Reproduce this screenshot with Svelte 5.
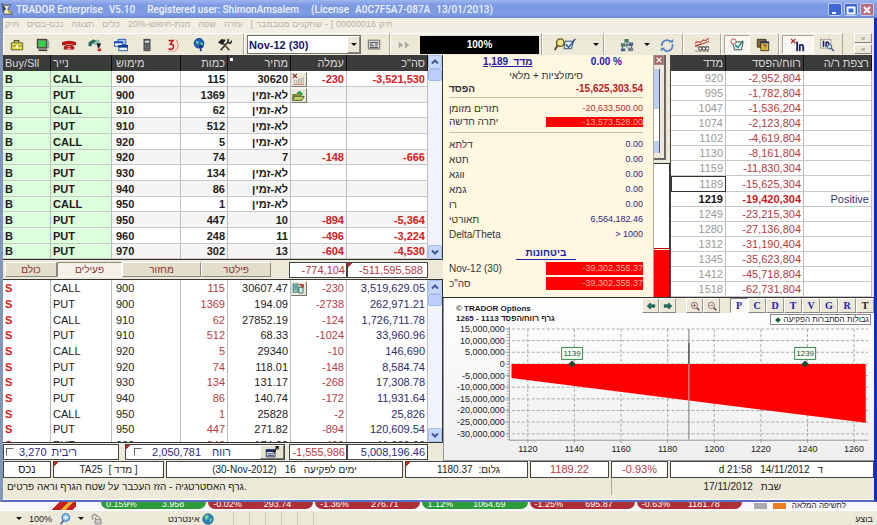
<script>
	const menu = ["תיק", "נכס-בסיס", "תצוגה", "כלים", "מנת-חיפוש-20%", "שפה", "עזרה"];

	const columns = ["Buy/Sll", "נייר", "מימוש", "כמות", "מחיר", "עמלה", 'סה"כ'];

	const buys = [
		["CALL", "900", "115", "30620", "-230", "-3,521,530"],
		["PUT", "900", "1369", "לא-זמין", "", ""],
		["CALL", "910", "62", "לא-זמין", "", ""],
		["PUT", "910", "512", "לא-זמין", "", ""],
		["CALL", "920", "5", "לא-זמין", "", ""],
		["PUT", "920", "74", "7", "-148", "-666"],
		["PUT", "930", "134", "לא-זמין", "", ""],
		["PUT", "940", "86", "לא-זמין", "", ""],
		["CALL", "950", "1", "לא-זמין", "", ""],
		["PUT", "950", "447", "10", "-894", "-5,364"],
		["PUT", "960", "248", "11", "-496", "-3,224"],
		["PUT", "970", "302", "13", "-604", "-4,530"],
	];

	const sells = [
		["CALL", "900", "115", "30607.47", "-230", "3,519,629.05"],
		["PUT", "900", "1369", "194.09", "-2738", "262,971.21"],
		["CALL", "910", "62", "27852.19", "-124", "1,726,711.78"],
		["PUT", "910", "512", "68.33", "-1024", "33,960.96"],
		["CALL", "920", "5", "29340", "-10", "146,690"],
		["PUT", "920", "74", "118.01", "-148", "8,584.74"],
		["PUT", "930", "134", "131.17", "-268", "17,308.78"],
		["PUT", "940", "86", "140.74", "-172", "11,931.64"],
		["CALL", "950", "1", "25828", "-2", "25,826"],
		["PUT", "950", "447", "271.82", "-894", "120,609.54"],
		["PUT", "960", "248", "174.00", "-496", "41,000.00"],
	];

	const scenarios = [
		["920", "-2,952,804"],
		["995", "-1,782,804"],
		["1047", "-1,536,204"],
		["1074", "-2,123,804"],
		["1102", "-4,619,804"],
		["1130", "-8,161,804"],
		["1159", "-11,830,304"],
		["1189", "-15,625,304"],
		["1219", "-19,420,304", "Positive"],
		["1249", "-23,215,304"],
		["1280", "-27,136,804"],
		["1312", "-31,190,404"],
		["1345", "-35,623,804"],
		["1412", "-45,718,804"],
		["1518", "-62,731,804"],
	];

	const greeks = [
		["דלתא", "0.00"],
		["תטא", "0.00"],
		["ווגא", "0.00"],
		["גמא", "0.00"],
		["רו", "0.00"],
		["תאורטי", "6,564,182.46"],
		["Delta/Theta", "> 1000"],
	];

	const ticker = [
		["0.159%", "3.958", "up"],
		["-0.02%", "293.74", "down"],
		["-1.36%", "276.71", "down"],
		["1.12%", "1064.69", "up"],
		["-1.25%", "695.87", "down"],
		["-0.63%", "1181.78", "down"],
	];

	const tabs = ["כולם", "פעילים", "מחזור", "פילטר"];
	const graphModes = ["P", "C", "D", "T", "V", "G", "R", "T"];

	let activeTab = $state(1);
	let activeMode = $state(0);

	// chart scales
	const yTicks = [15, 10, 5, 0, -5, -10, -15, -20, -25, -30];
	const xTicks = [1120, 1140, 1160, 1180, 1200, 1220, 1240, 1260];
	const px = (v) => 84 + (v - 1120) * 2.336;
	const py = (m) => 38 - m * 2.335;
	const tickLabel = (m) => (m * 1000000).toLocaleString("en-US");
</script>

{#snippet icon(name)}
	<svg class="icon" viewBox="0 0 16 16" aria-hidden="true">
		{#if name === "case"}
			<path d="M5 5V3h5v2" fill="none" stroke="#555520" stroke-width="1.500" />
			<path d="M1.500 5.500h13v8h-13z" fill="#e5e04a" stroke="#55551c" />
			<path d="M2 9h12" stroke="#77772a" /><path d="M7 8h2v3H7z" fill="#fff" />
		{:else if name === "monitor"}
			<path d="M1.500 1.500h11v10h-11z" fill="#77776a" stroke="#222" />
			<path d="M3 3h8v7H3z" fill="#31d54a" /><path d="M3 13h10v2H3z" fill="#444" /><path d="M14 3v9" stroke="#999" stroke-width="2" />
		{:else if name === "phone"}
			<path d="M0 5q8-3 16 0v3h-4V7H4v1H0z" fill="#c31818" stroke="#8a1010" stroke-width=".5" />
			<path d="M2 10l3-2h6l3 2v3H2z" fill="#ad1b1b" /><path d="M6 10h4M6 12h4" stroke="#f5b0a0" />
		{:else if name === "swap"}
			<path d="M1 9V5l5-3 3 1-5 4v2z" fill="#24715e" stroke="#114436" stroke-width=".5" />
			<path d="M6 6l5-4 2 2-4 4z" fill="#8fc7b5" stroke="#24715e" stroke-width=".5" /><path d="M10 6h5l-2 5h-2z" fill="#222" /><path d="M11 12h4v3h-4z" fill="#c42b22" />
		{:else if name === "windows"}
			<path d="M4.500 1.500h9v6h-9z" fill="#9fc4ff" stroke="#1749b3" /><path d="M.5 4.500h9v5h-9z" fill="#eaf2ff" stroke="#1749b3" />
			<path d="M0 4h10v2H0z" fill="#164ac1" /><path d="M5.500 8.500h10v6h-10z" fill="#eaf2ff" stroke="#1749b3" /><path d="M5 8h11v3H5z" fill="#103a9b" />
		{:else if name === "calc"}
			<path d="M4 1h8v14H4z" fill="#494b50" /><path d="M5.500 3h5v2.500h-5z" fill="#d1ded6" />
			<path d="M5.500 8h5M5.500 10.500h5M5.500 13h5" stroke="#c8c8c8" stroke-dasharray="1 1" />
		{:else if name === "three"}
			<path d="M3 3h5L5 7q5 0 3 5-2 2-5 0" fill="none" stroke="#c82020" stroke-width="1.800" />
			<path d="M11 2q3 1 2 4 2 2 0 6l-2 2" fill="none" stroke="#e0664e" /><path d="M2 15h9" stroke="#d7a59c" />
		{:else if name === "globe"}
			<circle cx="8" cy="6" r="5.500" fill="#1d61c9" stroke="#12346e" /><path d="M4 3l4 1-2 4zM9 5l4 1-2 3z" fill="#64d28c" />
			<path d="M8 8h5v3h-2v4H9v-4H8z" fill="#183f8d" />
		{:else if name === "tools"}
			<path d="M3 14l9-10M12 1l-1 4 3 1 2-3" fill="none" stroke="#333" stroke-width="2" />
			<path d="M13 14L5 5" stroke="#5a4b31" stroke-width="2" /><path d="M0 5l4-4 5 1-4 6z" fill="#262626" />
		{:else if name === "board"}
			<path d="M1.500 2.500h13v10h-13z" fill="#eee" stroke="#555" /><path d="M3 5h10M3 7h4M9 7h4M3 9h5M9 9h3M3 11h10" stroke="#333" />
		{:else if name === "skip"}
			<path d="M2 4l5 4-5 4zM9 4l5 4-5 4z" fill="#aaa89c" />
		{:else if name === "refresh"}
			<path d="M2 9a6 6 0 0 1 10-5M14 7a6 6 0 0 1-10 6" fill="none" stroke="#5682c9" stroke-width="2" />
			<path d="M10 5h5V1zM6 11H1v4z" fill="#5682c9" />
		{:else if name === "trend"}
			<path d="M0 6l3-2 3 1 4-3 2 1 4-3M0 9l7-2 9-3" fill="none" stroke="#bf3434" stroke-width="1.200" /><path d="M0 10h16M0 15h16" stroke="#8d8278" />
			<circle cx="6" cy="12" r="2" fill="#ddd" stroke="#333" /><circle cx="10" cy="12" r="2" fill="#ddd" stroke="#333" /><circle cx="14" cy="12" r="2" fill="#ddd" stroke="#333" />
		{:else if name === "check"}
			<path d="M3 4.500h12l-2 9H5z" fill="#e2f0ee" stroke="#253e3f" /><circle cx="4" cy="4" r="3" fill="#fff" stroke="#bd3333" />
			<path d="M6 8l3 3 6-8" fill="none" stroke="#157a72" stroke-width="1.500" />
		{:else if name === "help"}
			<path d="M1.500 1.500h10v9h-10z" fill="#7a6b32" stroke="#302b1b" /><path d="M5.500 4.500h9v10h-9z" fill="#e8bd26" stroke="#312c25" />
			<path d="M5 4h10v2H5z" fill="#23346c" /><path d="M8 8q4-1 4 1-2 1-2 2M10 12v1" fill="none" stroke="#33258b" />
		{:else if name === "xin"}
			<path d="M0 1l5 5M5 1L0 6" stroke="#b22b2b" stroke-width="1.500" /><path d="M7 4v11M10 15V7M10 9q4-3 4 1v5" fill="none" stroke="#19226f" stroke-width="2" />
		{:else if name === "find"}
			<path d="M.5 1.500h12v10H.5z" fill="none" stroke="#777" stroke-dasharray="2 1" /><path d="M4 3v7M7 10V5q3-1 3 2v3" fill="none" stroke="#19226f" stroke-width="1.800" />
			<circle cx="11" cy="10" r="2.500" fill="#cce5f5" stroke="#28456e" /><path d="M13 12l3 3" stroke="#28456e" stroke-width="1.500" />
		{:else if name === "cells"}
			<path d="M1 1l5 5M6 1L1 6" stroke="#862b1c" stroke-width="1.500" /><path d="M3 13V9h3v4M8 13V7h2v6M12 13V6h2v7" fill="none" stroke="#b3a59d" /><path d="M2 14h13" stroke="#b96051" />
		{:else if name === "folder"}
			<path d="M1 7h5l1-2h4v8H1z" fill="#9da536" stroke="#3d4a1c" /><path d="M3 9h12l-3 5H1z" fill="#c8d267" stroke="#344819" /><path d="M6 5q4-5 6 0h2l-3 4-3-4z" fill="#28a34b" />
		{:else if name === "copy"}
			<path d="M1.500 2.500h6v10h-6z" fill="#9adfd3" stroke="#195f5c" /><path d="M3 5h3M3 7h3M3 9h3" stroke="#195f5c" /><path d="M8.500 6.500h5v7h-5z" fill="#d9f1ec" stroke="#195f5c" /><path d="M8 2l7 1-1 5z" fill="#c72d2d" />
		{:else if name === "edit"}
			<path d="M1.500 5.500h10v8h-10z" fill="#dde2ee" stroke="#222b55" /><path d="M1 5h11v3H1z" fill="#202b62" /><path d="M3 10h7M3 12h7" stroke="#38436e" /><path d="M10 9l4-7M12 2h3v3" fill="none" stroke="#111" stroke-width="1.500" />
		{:else if name === "left"}
			<path d="M2 8l5-5v3h7v4H7v3z" fill="#1e7762" stroke="#123b36" />
		{:else if name === "right"}
			<path d="M14 8L9 3v3H2v4h7v3z" fill="#1e7762" stroke="#123b36" />
		{:else if name === "zoomin" || name === "zoomout"}
			<circle cx="7" cy="7" r="5" fill="#f5e8e5" stroke="#633" /><path d="M11 11l4 4" stroke="#322" stroke-width="2" /><path d="M4 7h6" stroke="#633" />
			{#if name === "zoomin"}<path d="M7 4v6" stroke="#633" />{/if}
		{:else if name === "earth"}
			<circle cx="8" cy="8" r="7" fill="#2684b8" stroke="#1c5c80" /><path d="M3 4l5-2 1 4-4 4zM10 7l4 1-3 5z" fill="#85ce93" />
		{:else if name === "lens"}
			<circle cx="9" cy="6" r="5" fill="#8cc4ee" stroke="#3579b5" stroke-width="1.500" /><path d="M6 10l-4 5" stroke="#44658a" stroke-width="2" /><path d="M6 6h6M9 3v6" stroke="#fff" stroke-width="1.500" />
		{:else if name === "lock"}
			<path d="M2 9V4q3-4 6 0" fill="none" stroke="#999" stroke-width="2" /><path d="M6 8V6q3-3 6 0v2" fill="none" stroke="#777" /><path d="M5.500 8.500h8v6h-8z" fill="#c9c9c9" stroke="#777" />
		{:else if name === "app"}
			<path d="M2 2l5 2 5-1-3 5 5 6H5z" fill="#e9eadf" stroke="#444" /><path d="M3 2l4 6-4 4z" fill="#434b4c" /><path d="M8 9l5 1-2 4z" fill="#b8a33b" />
		{/if}
	</svg>
{/snippet}

{#snippet scrollbar()}
	<div class="scrollbar" aria-hidden="true">
		<span class="arrow"><svg viewBox="0 0 8 8"><path d="M1 5.500l3-3 3 3" /></svg></span>
		<span class="thumb"></span>
		<span class="arrow last"><svg viewBox="0 0 8 8"><path d="M1 2.500l3 3 3-3" /></svg></span>
	</div>
{/snippet}

{#snippet cols()}
	<colgroup>
		<col class="c-side" /><col class="c-paper" /><col class="c-strike" /><col class="c-qty" /><col class="c-price" /><col class="c-fee" /><col class="c-total" />
	</colgroup>
{/snippet}

{#snippet order(side, row, actionIcon)}
	<tr>
		<td class="side">{side}</td>
		<td class="paper">{row[0]}</td>
		<td class="strike">{row[1]}</td>
		<td class="qty">{row[2]}</td>
		<td class="price">{row[3]}</td>
		<td class="fee">
			<div class="fee-cell">
				{#if actionIcon}
					<button class="row-action" aria-label={actionIcon}>{@render icon(actionIcon)}</button>
				{/if}
				<span>{row[4]}</span>
			</div>
		</td>
		<td class="total">{row[5]}</td>
	</tr>
{/snippet}

<div class="window">
	<header class="titlebar">
		{@render icon("app")}
		<h1><span>TRADOR Enterprise</span><span>V5.10</span><span class="user">Registered user: ShimonAmsalem</span><span>(License</span><span>A0C7F5A7-087A</span><span>13/01/2013)</span></h1>
		<button class="sys" aria-label="Minimize"><svg viewBox="0 0 12 12"><path d="M3 9h4" /></svg></button>
		<button class="sys" aria-label="Maximize"><svg viewBox="0 0 12 12"><path d="M2.500 3.500h7v6h-7z" /></svg></button>
		<button class="sys close" aria-label="Close"><svg viewBox="0 0 12 12"><path d="M3 3l6 6M9 3l-6 6" /></svg></button>
	</header>

	<div class="frame">
		<nav class="menu">
			{#each menu as item}
				<span dir="rtl">{item}</span>
			{/each}
			<span class="file"><bdi>[</bdi><bdi>שחקנים מנובמבר</bdi><bdi>-</bdi><bdi>[ 00000016</bdi><bdi>תיק</bdi></span>
		</nav>

		<div class="toolbar">
			<div class="group main-tools">
				{#each ["case", "monitor", "phone", "swap", "windows", "calc", "three", "globe", "tools"] as name}
					<button class="tool" aria-label={name}>{@render icon(name)}</button>
				{/each}
			</div>
			<div class="group">
				<div class="month">
					<select aria-label="Expiry"><option>Nov-12 (30)</option></select>
					<span class="drop"><i class="down"></i></span>
				</div>
				<button class="tool" aria-label="board">{@render icon("board")}</button>
			</div>
			<div class="group progress-group">
				<button class="tool" aria-label="skip">{@render icon("skip")}</button>
				<div class="progress">100%</div>
			</div>
			<div class="group scan">
				<button class="tool wide" aria-label="Scan">
					<svg class="icon-wide" viewBox="0 0 24 16" aria-hidden="true">
						<circle cx="7" cy="6" r="4" fill="#f3e58e" stroke="#66551c" stroke-width="1.500" /><path d="M4 9l-3 5" stroke="#554516" stroke-width="2" />
						<path d="M12 4.500h9l-2 8h-8z" fill="#dcecf5" stroke="#294b68" /><path d="M13 8l3 3 7-9" fill="none" stroke="#244c88" stroke-width="1.500" />
					</svg>
				</button>
				<i class="down"></i>
			</div>
			<div class="group tree">
				<button class="tool" aria-label="Tree">
					<svg class="icon" viewBox="0 0 16 16" aria-hidden="true">
						<path d="M8 4v7M3 8h10M3 8v4M13 8v4" stroke="#334466" /><path d="M5 1h5v4H5zM1 6h5v4H1z" fill="#4b8067" /><path d="M10 5h5v4h-5zM1 12h5v3H1z" fill="#495e9a" /><path d="M9 11h6v4H9z" fill="#74848c" />
					</svg>
				</button>
				<i class="down"></i>
				<button class="tool" aria-label="refresh">{@render icon("refresh")}</button>
			</div>
			<div class="group trend"><button class="tool" aria-label="trend">{@render icon("trend")}</button></div>
			<div class="group">
				<button class="tool pressed" aria-label="check">{@render icon("check")}</button>
				<button class="tool" aria-label="help">{@render icon("help")}</button>
			</div>
			<div class="group">
				<button class="tool pressed wide" aria-label="xin">{@render icon("xin")}</button>
				<button class="tool" aria-label="find">{@render icon("find")}</button>
			</div>
			<div class="mini">
				<button aria-label="More up">«</button>
				<button aria-label="More down">«</button>
			</div>
		</div>

		<main class="panes">
			<section class="orders">
				<div class="grid-box">
					<table class="orders-table buy">
						{@render cols()}
						<thead>
							<tr>
								{#each columns as name, i}
									<th class:num={i > 2} class:strike={i === 2} class:sorted={i === 4}>{name}</th>
								{/each}
							</tr>
						</thead>
						<tbody>
							{#each buys as row, i}
								{@render order("B", row, ["cells", "folder"][i])}
							{/each}
						</tbody>
					</table>
					{@render scrollbar()}
				</div>

				<div class="tabs">
					<div class="tab-list">
						{#each tabs as tab, i}
							<button class:active={activeTab === i} onclick={() => (activeTab = i)}>{tab}</button>
						{/each}
					</div>
					<output class="sum fee-sum loss">-774,104</output>
					<output class="sum total-sum loss flag">-511,595,588</output>
					<span class="sum-end"></span>
				</div>

				<div class="grid-box sell-box">
					<table class="orders-table sell">
						{@render cols()}
						<tbody>
							{#each sells as row, i}
								{@render order("S", row, ["copy"][i])}
							{/each}
						</tbody>
					</table>
					{@render scrollbar()}
				</div>

				<div class="totals">
					<label class="sum interest"><input type="checkbox" /><span>3,270</span><span>ריבית</span></label>
					<div class="sum profit flag">
						<label><input type="checkbox" /><span class="amount">2,050,781</span><span>רווח</span></label>
						<button class="edit" aria-label="edit">{@render icon("edit")}</button>
					</div>
					<output class="sum fee-sum loss">-1,555,986</output>
					<output class="sum total-sum">5,008,196.46</output>
					<span class="sum-end"></span>
				</div>
			</section>

			<section class="analysis">
				<div class="upper">
					<aside class="summary">
						<div class="summary-top">
							<a href="#index">1,189 &nbsp;מדד</a>
							<b>0.00 %</b>
						</div>
						<p class="mode">סימולציות + מלאי</p>
						<div class="line result"><span>הפסד</span><b>-15,625,303.54</b></div>
						<div class="cash">
							<div class="line"><span>תזרים מזומן</span><span class="value red">-20,633,500.00</span></div>
							<div class="line"><span>יתרה חדשה</span><span class="value alarm">-13,573,528.00</span></div>
						</div>
						<div class="greeks">
							{#each greeks as [name, value]}
								<div class="line"><span>{name}</span><span class="value">{value}</span></div>
							{/each}
						</div>
						<h2>ביטחונות</h2>
						<div class="margin">
							<div class="line"><span>Nov-12 (30)</span><span class="value alarm">-39,302,355.37</span></div>
							<div class="line"><span>סה"כ</span><span class="value alarm">-39,302,355.37</span></div>
						</div>
					</aside>
					<div class="behind">
						<div class="tool-window">
							<button class="x" aria-label="Close panel"><svg viewBox="0 0 10 10"><path d="M2 2l6 6M8 2L2 8" /></svg></button>
							<div class="strip"></div>
						</div>
						<div class="bar"></div>
					</div>
					<table class="scenarios">
						<colgroup><col class="s-index" /><col class="s-result" /><col class="s-floor" /></colgroup>
						<thead><tr><th>מדד</th><th>רווח/הפסד</th><th>רצפת ר/ה</th></tr></thead>
						<tbody>
							{#each scenarios as [index, result, floor]}
								<tr class:current={index === "1219"}>
									<td class:picked={index === "1189"}>{index}</td>
									<td class="result">{result}</td>
									<td class="floor">{floor || ""}</td>
								</tr>
							{/each}
						</tbody>
					</table>
				</div>

				<div class="graph">
					<div class="graph-head">
						<div class="graph-title">
							<div>© TRADOR Options</div>
							<div dir="rtl">גרף רווח/הפסד 1113 - 1265</div>
						</div>
						<div class="graph-side">
							<div class="graph-tools">
								<button aria-label="left">{@render icon("left")}</button>
								<button aria-label="right">{@render icon("right")}</button>
								<span class="gap"></span>
								<button aria-label="zoom in">{@render icon("zoomin")}</button>
								<button aria-label="zoom out">{@render icon("zoomout")}</button>
								<span class="gap"></span>
								{#each graphModes as mode, i}
									<button class="mode-btn" class:active={activeMode === i} class:dark={i === 7} onclick={() => (activeMode = i)}>{mode}</button>
								{/each}
							</div>
							<div class="legend"><i></i><span>גבולות הסתברות הפקיעה</span></div>
						</div>
					</div>
					<svg class="plot" viewBox="0 0 431 134" role="img" aria-label="רווח/הפסד">
						{#each yTicks as m}
							<path class="guide" d="M68 {py(m)}H425" />
							<path class="axis" d="M62 {py(m)}H66" />
							<text x="61" y={py(m) + 3} text-anchor="end">{tickLabel(m)}</text>
						{/each}
						{#each xTicks as v}
							<path class="guide" d="M{px(v)} 3V114" />
							<path class="axis" d="M{px(v)} 114v3" />
							<text x={px(v)} y="126" text-anchor="middle">{v}</text>
						{/each}
						<path class="axis" d="M65.500 1V114.500H425" />
						<path class="ticks" d="M64 2V114" />
						<path class="loss-area" d="M{px(1113)} {py(0)}H{px(1265)}V{py(-25.3)}L{px(1113)} {py(-6)}Z" />
						<path class="cursor" d="M245.500 3V114" />
						<path class="cursor-top" d="M245.500 17V38" />
						<path class="cursor-area" d="M245.500 38V75" />
						{#each [1139, 1239] as v}
							<rect class="tag" x={px(v) - 10.5} y="21.500" width="21" height="12" />
							<text class="tag-text" x={px(v)} y="30" text-anchor="middle">{v}</text>
							<path class="marker" d="M{px(v)} 34.500l3.500 3.500-3.500 3.500-3.500-3.500z" />
						{/each}
					</svg>
				</div>
			</section>
		</main>

		<div class="status">
			<span>נכס</span>
			<span class="flag"><bdi>TA25</bdi><bdi>[ מדד ]</bdi></span>
			<span><bdi>(30-Nov-2012)</bdi><bdi>16</bdi><bdi>ימים לפקיעה</bdi></span>
			<span class="flag end"><bdi>1180.37</bdi><bdi dir="rtl">גלום:</bdi></span>
			<span class="loss">1189.22</span>
			<span class="loss">-0.93%</span>
			<span class="date"><bdi>d 21:58</bdi><bdi>14/11/2012</bdi><bdi>ד</bdi></span>
		</div>
		<div class="hint">
			<span>גרף האסטרטגיה - הזז העכבר על שטח הגרף וראה פרטים.</span>
			<span class="day"><bdi>17/11/2012</bdi><bdi>שבת</bdi></span>
		</div>
	</div>
</div>

<div class="ticker">
	<span class="ticker-logo"><i></i></span>
	{#each ticker as [change, value, dir]}
		<span class="pill {dir}"><span>{change}</span><span>{value}</span></span>
	{/each}
	<span class="ticker-end"><i class="knob"></i><i class="orange"></i><span>לחשיפה המלאה</span></span>
</div>

<footer class="browser-status">
	<i class="down"></i>
	<span>100%</span>
	{@render icon("lens")}
	<i class="down"></i>
	{@render icon("lock")}
	<span class="zone">אינטרנט {@render icon("earth")}</span>
	<span class="slots"><i></i><i></i><i></i><i></i><i></i><i></i></span>
	<span class="done">בוצע</span>
</footer>

<style>
	:global(body) {
		margin: 0;
		background: #ece9d8;
		font-family: "Liberation Sans", Arial, sans-serif;
		font-size: 11px;
		color: #222;
	}
	button,
	select {
		font: inherit;
		color: inherit;
		margin: 0;
		padding: 0;
	}
	svg {
		display: block;
	}
	.icon {
		width: 14px;
		height: 14px;
		flex: none;
	}
	.icon-wide {
		width: 24px;
		height: 15px;
	}
	.down {
		border: 3px solid transparent;
		border-top-color: #111;
		border-bottom: 0;
		flex: none;
	}
	.titlebar {
		display: flex;
		align-items: center;
		gap: 2px;
		height: 18px;
		padding: 0 3px 0 0;
		background: linear-gradient(#9db5ee, #7b98e2 30%, #7e9ce4 80%, #6c86cf);
		color: #edf2ff;
	}
	.titlebar h1 {
		display: flex;
		gap: 6px;
		flex: 1;
		margin: 0;
		font: 500 10px/19px Roboto, "Open Sans", sans-serif;
		white-space: nowrap;
	}
	.user {
		margin: 0 6px;
	}
	.sys {
		width: 14px;
		height: 13px;
		border: 1px solid #c0cdf2;
		border-radius: 2px;
		background: #3d67d2;
	}
	.sys svg {
		fill: none;
		stroke: #fff;
		stroke-width: 2;
	}
	.sys.close {
		background: #bb6a7c;
	}
	.frame {
		border-left: 3px solid #8496b5;
		border-right: 3px solid #0c2fc0;
		border-bottom: 2px solid #5b6bc0;
		background: #ece9d8;
	}
	.menu {
		display: flex;
		gap: 8px;
		height: 15px;
		padding-left: 2px;
		line-height: 13px;
		font-size: 9px;
		color: #b5b2a4;
		white-space: nowrap;
		background: #f1efe4;
	}
	.file {
		display: flex;
		gap: 3px;
	}
	.toolbar {
		display: flex;
		height: 22px;
		white-space: nowrap;
	}
	.group {
		display: flex;
		align-items: center;
		padding: 0 2px;
		border-right: 1px solid #aca899;
		border-left: 1px solid #fff;
		border-top: 1px solid #fff;
	}
	.main-tools {
		padding: 0 5px 0 0;
	}
	.tool {
		display: flex;
		align-items: center;
		justify-content: center;
		width: 26px;
		height: 19px;
		border: 1px solid transparent;
		background: none;
	}
	.tool.wide {
		width: 32px;
	}
	.tool.pressed {
		background: #f8f7f1;
		border-color: #aca899 #fff #fff #aca899;
	}
	.month {
		display: flex;
		width: 112px;
		height: 17px;
		border: 1px solid #77756a;
		background: #fff;
	}
	.month select {
		flex: 1;
		min-width: 0;
		appearance: none;
		border: 0;
		padding-left: 1px;
		background: #fff;
		color: #16166b;
		font-weight: bold;
		font-size: 11px;
	}
	.drop {
		display: flex;
		align-items: center;
		justify-content: center;
		width: 11px;
		background: #ece9d8;
		border: 1px solid;
		border-color: #fff #888 #888 #fff;
	}
	.progress-group {
		gap: 3px;
		padding-left: 0;
	}
	.progress {
		width: 119px;
		height: 18px;
		background: #000;
		color: #fff;
		font: bold 10px/17px "Liberation Sans", sans-serif;
		text-align: center;
	}
	.scan {
		gap: 12px;
		padding: 0 4px 0 6px;
	}
	.tree {
		gap: 4px;
		padding: 0 2px 0 9px;
	}
	.trend {
		padding: 0 5px;
	}
	.mini {
		display: flex;
		flex-direction: column;
		width: 18px;
		margin-left: auto;
		margin-right: 2px;
		gap: 1px;
	}
	.mini button {
		height: 10px;
		border: 1px solid;
		border-color: #fff #888 #888 #fff;
		background: #ece9d8;
		color: #888;
		font-size: 8px;
		line-height: 7px;
	}
	.panes {
		display: grid;
		grid-template-columns: 440fr 431fr;
	}
	.orders,
	.analysis {
		min-width: 0;
	}
	.grid-box {
		display: flex;
		border-right: 1px solid #333;
		border-bottom: 1px solid #333;
		background: #fff;
	}
	.orders-table {
		flex: 1;
		min-width: 0;
		table-layout: fixed;
		border-collapse: separate;
		border-spacing: 0;
	}
	.c-side { width: 48px; }
	.c-paper { width: 61px; }
	.c-strike { width: 69px; }
	.c-qty { width: 47px; }
	.c-price { width: 63px; }
	.c-fee { width: 56px; }
	.c-total { width: 81px; }
	th {
		height: 16px;
		box-sizing: border-box;
		padding: 0 4px 0 2px;
		background: #3b3b3b;
		border-right: 1px solid #111;
		color: #d8d8d8;
		font-size: 11px;
		font-weight: normal;
		line-height: 14px;
		text-align: left;
		white-space: nowrap;
	}
	th.num,
	.scenarios th {
		text-align: right;
		padding-right: 2px;
	}
	th.sorted {
		background: linear-gradient(#fff, #fff) 2px 3px / 3px 3px no-repeat #3b3b3b;
	}
	td {
		height: 16px;
		box-sizing: border-box;
		padding: 0 2px;
		border-right: 1px solid #bcbcbc;
		line-height: 14px;
		white-space: nowrap;
	}
	.orders-table tbody tr:nth-child(3n) td {
		height: 15px;
	}
	.buy td {
		border-bottom: 1px solid #c8c8c8;
		font-weight: bold;
		color: #1c1c1c;
	}
	.buy tr:nth-child(even) td {
		background: #f5f5f5;
	}
	.buy tr .side,
	.buy tr:nth-child(even) .side,
	.buy tr .paper,
	.buy tr:nth-child(even) .paper {
		background: #dcffdc;
	}
	.strike {
		padding-left: 4px;
	}
	td.qty,
	td.price,
	td.total {
		text-align: right;
	}
	.fee-cell {
		display: flex;
		height: 14px;
	}
	.fee-cell span {
		margin-left: auto;
	}
	.buy .fee,
	.buy .total {
		color: #d42020;
	}
	.sell .side {
		color: #dc2020;
		font-weight: bold;
	}
	.sell .qty,
	.sell .fee {
		color: #b83c44;
	}
	.sell .total {
		color: #2c2c6c;
	}
	td.fee {
		padding-left: 0;
	}
	.row-action {
		width: 16px;
		height: 15px;
		border: 1px solid;
		border-color: #fff #777 #777 #ddd;
		background: #ece9d8;
	}
	.row-action .icon {
		width: 13px;
		height: 13px;
	}
	.scrollbar {
		display: flex;
		flex-direction: column;
		width: 14px;
		background: #f0f3fb;
	}
	.arrow {
		height: 14px;
		border: 1px solid #a9bfec;
		box-sizing: border-box;
		background: #c8d8fa;
		border-radius: 2px;
	}
	.arrow svg {
		width: 8px;
		height: 8px;
		margin: 2px auto;
		fill: none;
		stroke: #3d5a96;
		stroke-width: 2;
	}
	.thumb {
		height: 10px;
		background: #bccff8;
		border: 1px solid #a3baf0;
		border-radius: 2px;
	}
	.last {
		margin-top: auto;
	}
	.tabs,
	.totals {
		display: flex;
		align-items: center;
	}
	.tabs {
		height: 19px;
	}
	.tab-list {
		display: grid;
		grid-template-columns: 52fr 65fr 79fr 70fr;
		flex: 1;
		margin: 0 18px 0 2px;
	}
	.tabs button {
		height: 15px;
		border: 1px solid;
		border-color: #fff #8c8978 #8c8978 #fff;
		background: #e2decb;
		color: #8a3030;
		font-size: 10px;
		line-height: 12px;
	}
	.tabs button.active {
		background: #f4f2e8;
		border-color: #8c8978 #fff #fff #8c8978;
	}
	.sum {
		box-sizing: border-box;
		height: 16px;
		border: 1px solid #444;
		background: #fff;
		color: #2b2b86;
		line-height: 14px;
		text-align: right;
		white-space: nowrap;
	}
	.fee-sum {
		width: 58px;
		padding-right: 1px;
	}
	.total-sum {
		width: 81px;
		padding-right: 2px;
	}
	.tabs .total-sum {
		padding-right: 4px;
	}
	.sum-end {
		width: 15px;
	}
	.loss {
		color: #b83a42;
	}
	.flag {
		background: linear-gradient(135deg, #c22 3px, transparent 3px) #fff;
	}
	.sell-box {
		height: 162px;
		overflow: hidden;
		border-top: 1px solid #333;
		align-items: flex-start;
	}
	.sell-box .scrollbar {
		height: 162px;
	}
	.totals {
		height: 17px;
	}
	.totals input {
		appearance: none;
		width: 8px;
		height: 8px;
		margin: 0;
		border: 1px solid;
		border-color: #666 #eee #eee #666;
	}
	.interest,
	.profit label {
		display: flex;
		align-items: center;
		gap: 5px;
		padding-left: 2px;
	}
	.interest {
		flex: 115;
		margin-right: 6px;
	}
	.profit {
		display: flex;
		flex: 162;
		margin-right: 4px;
	}
	.profit label {
		flex: 1;
		padding-left: 8px;
	}
	.amount {
		padding: 0 6px 0 5px;
	}
	.edit {
		display: flex;
		align-items: center;
		justify-content: center;
		width: 24px;
		height: 14px;
		border: 1px solid;
		border-color: #fff #777 #777 #fff;
		background: #e6e2d0;
	}
	.analysis {
		display: flex;
		flex-direction: column;
	}
	.upper {
		display: grid;
		grid-template-columns: minmax(0, 211fr) minmax(0, 16fr) minmax(0, 204fr);
		border-bottom: 1px solid #333;
	}
	.summary {
		box-sizing: border-box;
		padding: 0 10px 0 6px;
		border-right: 1px solid #aaa590;
		background: #fff7df;
		font-size: 10px;
		color: #33333a;
	}
	.summary-top {
		display: flex;
		justify-content: space-between;
		padding: 0 21px 0 34px;
		line-height: 14px;
		font-weight: bold;
		color: #2222aa;
	}
	.summary a {
		color: #2222aa;
	}
	.mode {
		margin: 0;
		line-height: 13px;
		text-align: center;
	}
	.line {
		display: flex;
		align-items: center;
		justify-content: space-between;
		line-height: 13px;
	}
	.result b {
		color: #b51f28;
	}
	.line.result {
		font-weight: bold;
	}
	.value {
		font-size: 9px;
		color: #2b2b86;
	}
	.value.red {
		color: #b23437;
	}
	.value.alarm {
		width: 97px;
		line-height: 10px;
		background: #f00;
		color: #ffb0a0;
		text-align: right;
	}
	.cash,
	.greeks {
		border-top: 1px solid #c9c1a8;
		margin-top: 2px;
		padding: 4px 0 2px;
	}
	.greeks .line {
		line-height: 15px;
	}
	.summary h2 {
		width: 60px;
		margin: 2px auto 1px;
		border-bottom: 1px solid #2222aa;
		font-size: 10px;
		line-height: 13px;
		text-align: center;
		color: #2222aa;
	}
	.margin .line {
		line-height: 15px;
	}
	.margin .value.alarm {
		line-height: 13px;
	}
	.behind {
		display: flex;
		flex-direction: column;
	}
	.tool-window {
		box-sizing: border-box;
		height: 105px;
		margin-right: 4px;
		border-right: 2px solid #6b6660;
		border-bottom: 2px solid #6b6660;
		background: #ece9d8;
	}
	.x {
		display: block;
		width: 10px;
		height: 10px;
		border: 1px solid #a88;
		background: #a76565;
	}
	.x svg {
		width: 8px;
		height: 8px;
		stroke: #fff;
		stroke-width: 1.5;
	}
	.strip {
		width: 5px;
		height: 84px;
		margin-top: 4px;
		border-right: 1px solid #555;
		background: linear-gradient(#bccff8 40px, #fff 40px 72px, #bccff8 72px);
	}
	.bar {
		flex: 1;
		margin-top: 3px;
		border-top: 1px solid #333;
		border-right: 1px solid #333;
		background: linear-gradient(#fff 84px, #b00 84px 85px, #fff 85px 86px, #f00 86px);
	}
	.scenarios {
		table-layout: fixed;
		border-spacing: 0;
		border-left: 1px solid #444;
		background: #fff;
		text-align: right;
		margin-right: 2px;
	}
	.s-index { width: 55px; }
	.s-result { width: 78px; }
	.s-floor { width: 68px; }
	.scenarios td {
		height: 15px;
		border-bottom: 1px solid #c8c8c8;
		color: #999;
	}
	.scenarios .result {
		color: #b83a42;
	}
	.scenarios .floor {
		color: #33336b;
	}
	.scenarios .current td:first-child {
		color: #111;
		font-weight: bold;
	}
	.scenarios .current .result {
		color: #c31c24;
		font-weight: bold;
	}
	.scenarios .picked {
		border: 1px solid #333;
	}
	.graph {
		flex: 1;
		border-left: 1px solid #999;
		border-bottom: 1px solid #999;
		background: linear-gradient(#fff, #efefef);
	}
	.graph-head {
		display: flex;
		justify-content: space-between;
		height: 28px;
	}
	.graph-title {
		padding: 6px 0 0 12px;
		font-size: 8px;
		line-height: 10px;
		font-weight: bold;
		color: #222;
	}
	.graph-side {
		display: flex;
		flex-direction: column;
		align-items: flex-end;
	}
	.graph-tools {
		display: flex;
		background: #ece9d8;
	}
	.graph-tools button {
		display: flex;
		align-items: center;
		justify-content: center;
		box-sizing: border-box;
		width: 17px;
		height: 15px;
		border: 1px solid;
		border-color: #fff #999 #888 #fff;
		background: #ece9d8;
	}
	.graph-tools .icon {
		width: 10px;
		height: 10px;
	}
	.gap {
		width: 10px;
	}
	.graph-tools .mode-btn {
		width: 18px;
		font: bold 10px "Liberation Serif", serif;
		color: #2222b0;
	}
	.graph-tools .mode-btn.dark {
		color: #222;
	}
	.graph-tools .mode-btn.active {
		background: #fafaf5;
		border-color: #888 #fff #fff #888;
	}
	.legend {
		display: flex;
		align-items: center;
		gap: 4px;
		margin: 1px 3px 0 0;
		padding: 0 1px 0 5px;
		border: 1px solid #888;
		background: #fff;
		font-size: 8px;
		line-height: 9px;
	}
	.legend i {
		width: 4px;
		height: 4px;
		background: #185c32;
		transform: rotate(45deg);
	}
	.plot {
		width: 100%;
		overflow: visible;
		font-size: 9px;
	}
	.plot text {
		fill: #222;
	}
	.guide {
		stroke: #aaa;
		stroke-dasharray: 3 2;
	}
	.axis {
		fill: none;
		stroke: #999;
	}
	.ticks {
		stroke: #aaa;
		stroke-width: 2;
		stroke-dasharray: 1 2;
	}
	.loss-area {
		fill: #f00;
	}
	.cursor {
		stroke: #777;
	}
	.cursor-top {
		stroke: #333;
	}
	.cursor-area {
		stroke: #ff8080;
	}
	.tag {
		fill: #f6fff6;
		stroke: #3c8a50;
	}
	.plot .tag-text {
		fill: #184c28;
		font-size: 8px;
	}
	.marker {
		fill: #124c2a;
	}
	.status {
		display: grid;
		grid-template-columns: 48fr 111fr 237fr 123fr 79fr 57fr 204fr;
		gap: 2px;
		line-height: 15px;
	}
	.status > span {
		display: flex;
		justify-content: center;
		gap: 8px;
		border: 1px solid #444;
		background-color: #fff;
		white-space: nowrap;
	}
	.status bdi,
	.hint span {
		font-size: 10px;
	}
	.status .flag {
		gap: 6px;
	}
	.status .end {
		justify-content: flex-end;
		padding-right: 27px;
	}
	.status .date {
		justify-content: flex-end;
		padding-right: 50px;
	}
	.hint {
		display: grid;
		grid-template-columns: 608fr 263fr;
		height: 17px;
		padding-bottom: 4px;
		line-height: 17px;
		border-bottom: 1px solid #fff;
	}
	.hint span {
		padding-left: 4px;
	}
	.hint .day {
		display: flex;
		justify-content: flex-end;
		gap: 8px;
		padding-right: 93px;
		border-left: 1px solid #aca899;
	}
	.ticker {
		display: grid;
		grid-template-columns: 99fr repeat(6, 105fr) 133fr;
		gap: 2px;
		height: 8px;
		overflow: hidden;
		background: #f8f8fb;
	}
	.ticker-logo {
		padding-left: 52px;
	}
	.ticker-logo i {
		display: block;
		width: 24px;
		height: 8px;
		background: linear-gradient(135deg, transparent 5px, #c41e1e 5px 12px, #edb330 12px 15px, #c41e1e 15px 20px, transparent 20px);
	}
	.pill {
		display: flex;
		justify-content: space-between;
		box-sizing: border-box;
		height: 7px;
		padding: 0 22px 0 5px;
		border-radius: 0 0 8px 8px;
		color: #fff;
		font: 9px/4px "Liberation Sans", sans-serif;
		overflow: hidden;
	}
	.up {
		background: #2d9b38;
	}
	.down.pill {
		border: 0;
		background: #ad3038;
	}
	.ticker-end {
		display: flex;
		align-items: center;
		gap: 6px;
		padding-left: 10px;
		font-size: 8px;
		line-height: 7px;
		white-space: nowrap;
	}
	.knob,
	.orange {
		width: 13px;
		height: 6px;
		background: #aaa;
	}
	.orange {
		background: #ee7d22;
	}
	.browser-status {
		display: flex;
		align-items: center;
		gap: 7px;
		height: 17px;
		padding: 0 4px 0 16px;
		background: #ece9d8;
		border-top: 1px solid #fff;
		font-size: 9px;
		box-sizing: border-box;
	}
	.browser-status .icon {
		width: 12px;
		height: 12px;
	}
	.zone {
		display: flex;
		align-items: center;
		gap: 2px;
		margin-left: 58px;
	}
	.slots {
		display: flex;
		gap: 15px;
		padding-left: 12px;
	}
	.slots i {
		height: 13px;
		border-left: 1px solid #cfcbb8;
	}
	.done {
		margin-left: auto;
	}
</style>
